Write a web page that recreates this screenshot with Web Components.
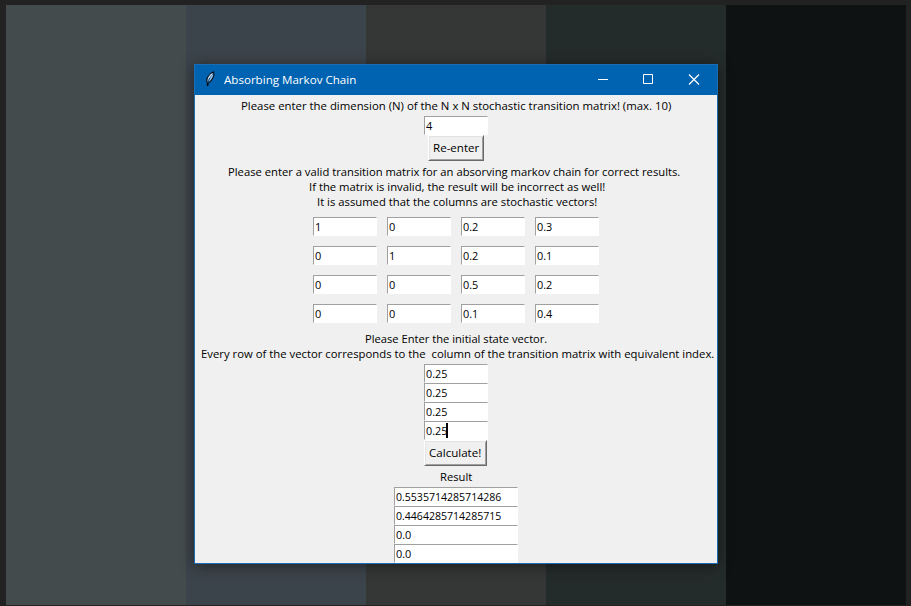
<!DOCTYPE html>
<html lang="en"><head><meta charset="utf-8"><title>Absorbing Markov Chain</title>
<style>html,body{margin:0;width:911px;height:606px;overflow:hidden;background:#222}</style></head><body>
<desk-top>
<app-window>
<fit-text slot="title" w="132">Absorbing Markov Chain</fit-text>
<text-block h="21"><fit-text w="430" x="46">Please enter the dimension (N) of the N x N stochastic transition matrix! (max. 10)</fit-text></text-block>
<entry-box w="64" n="6">4</entry-box>
<push-button w="56"><fit-text w="46">Re-enter</fit-text></push-button>
<text-block h="51"><fit-text w="452" x="33">Please enter a valid transition matrix for an absorving markov chain for correct results.</fit-text><fit-text w="296" x="114">If the matrix is invalid, the result will be incorrect as well!</fit-text><fit-text w="280" x="122">It is assumed that the columns are stochastic vectors!</fit-text></text-block>
<matrix-grid></matrix-grid>
<text-block h="36"><fit-text w="182" x="170">Please Enter the initial state vector.</fit-text><fit-text w="513" x="6">Every row of the vector corresponds to the  column of the transition matrix with equivalent index.</fit-text></text-block>
<entry-box w="64" n="21">0.25</entry-box><entry-box w="64" n="21">0.25</entry-box><entry-box w="64" n="21">0.25</entry-box><entry-box w="64" n="21" caret>0.25</entry-box>
<push-button w="63"><fit-text w="52">Calculate!</fit-text></push-button>
<text-block h="21"><fit-text w="32" x="245">Result</fit-text></text-block>
<entry-box w="124" n="105">0.5535714285714286</entry-box><entry-box w="124" n="105">0.4464285714285715</entry-box><entry-box w="124" n="15">0.0</entry-box><entry-box w="124" n="15">0.0</entry-box>
</app-window>
</desk-top>
<script>
const FONT='"Open Sans","Noto Sans",sans-serif';
const root=(el,html)=>{const r=el.attachShadow({mode:'open'});r.innerHTML=html;return r};

// One line of text condensed to a given width.
customElements.define('fit-text',class extends HTMLElement{
 connectedCallback(){
  if(this.shadowRoot)return;
  const w=+this.getAttribute('w'),x=this.getAttribute('x')||0;
  const r=root(this,`<style>:host{display:block;flex:none;height:15px;white-space:pre;margin-left:${x}px;width:${w+1}px;font:11.6px/15px ${FONT}}span{display:inline-block;transform-origin:0 50%}</style><span><slot></slot></span>`);
  const s=r.querySelector('span');
  s.style.transform='scaleX('+(w+.3)/s.getBoundingClientRect().width+')';
 }});
customElements.define('text-block',class extends HTMLElement{
 connectedCallback(){root(this,`<style>:host{display:flex;flex-direction:column;justify-content:center;align-self:stretch;height:${this.getAttribute('h')}px}</style><slot></slot>`)}});
customElements.define('entry-box',class extends HTMLElement{
 connectedCallback(){
  if(this.shadowRoot)return;
  const t=this.textContent;
  root(this,`<style>:host{box-sizing:border-box;display:flex;align-items:center;flex:none;width:${this.getAttribute('w')}px;height:19px;background:#fff;border:1px solid #a0a0a0;border-right-color:#fff;border-bottom-color:#fff;padding-left:1px}i{width:2px;height:15px;background:#000;margin-left:-2px}</style><fit-text w="${this.getAttribute('n')}">${t}</fit-text>${this.hasAttribute('caret')?'<i></i>':''}`);
 }});
customElements.define('push-button',class extends HTMLElement{
 connectedCallback(){const w=+this.getAttribute('w');root(this,`<style>:host{box-sizing:border-box;display:flex;align-items:center;justify-content:center;flex:none;width:${w}px;margin-right:${w%2}px;height:26px;padding-bottom:2px;background:#f0f0f0;border:1px solid #fff;border-right-color:#696969;border-bottom-color:#696969;box-shadow:inset 1px 1px #e3e3e3,inset -1px -1px #a0a0a0}</style><slot></slot>`)}});
customElements.define('matrix-grid',class extends HTMLElement{
 connectedCallback(){
  const v=['1','0','0.2','0.3','0','1','0.2','0.1','0','0','0.5','0.2','0','0','0.1','0.4'];
  root(this,`<style>:host{display:grid;grid-template-columns:repeat(4,64px);gap:10px;padding:5px 0}</style>${v.map(t=>`<entry-box w="64" n="${t.length>1?15:6}">${t}</entry-box>`).join('')}`);
 }});
customElements.define('app-window',class extends HTMLElement{
 connectedCallback(){root(this,`<style>
:host{box-sizing:border-box;display:flex;flex-direction:column;width:524px;height:500px;border:1px solid #1a6db5;background:#f0f0f0;box-shadow:0 2px 14px rgba(0,0,0,.45);color:#000}
header{display:flex;align-items:center;height:30px;flex:none;background:#0063b1;color:#fff}
.f{width:16px;height:16px;margin:-2px 5px 0 8px}.t{flex:1;padding-bottom:2px}
.c{display:block;width:46px;height:30px}
main{display:flex;flex-direction:column;align-items:center;flex:1}
</style>
<header><svg class="f" viewBox="0 0 16 16"><path d="M4.500 15C4.500 12 5.500 9.500 8 6" fill="none" stroke="#000" stroke-width="1.500"/><path d="M4.300 12C2.500 8.500 5 3 10.500 .8C11.800 4.500 9.500 9.500 5.500 12Z" fill="#8dc0ec" stroke="#061422" stroke-width="1.200"/><path d="M5 12C6 8 7.500 5 9.800 2.500" fill="none" stroke="#17426d" stroke-width="1"/><path d="M5.500 7.500L8.800 3" fill="none" stroke="#eaf6ff"/></svg><div class="t"><slot name="title"></slot></div>
<svg class="c" viewBox="0 0 46 30"><path d="M19 14.500h10" stroke="#fff"/></svg><svg class="c" viewBox="0 0 46 30"><path d="M18.500 9.500h9v9h-9z" fill="none" stroke="#fff"/></svg><svg class="c" viewBox="0 0 46 30"><path d="M18 9.500l10 10m0-10l-10 10" stroke="#fff" stroke-width="1.200"/></svg></header>
<main><slot></slot></main>`)}});
customElements.define('desk-top',class extends HTMLElement{
 connectedCallback(){root(this,`<style>
:host{box-sizing:border-box;display:block;width:911px;height:606px;padding:5px 5px 1px 6px;background:#222}
div{box-sizing:border-box;height:600px;padding:59px 0 0 188px;background:linear-gradient(90deg,#434b4d 0 180px,#3c444b 180px 360px,#353737 360px 540px,#242c2b 540px 720px,#0e1213 720px)}
</style><div><slot></slot></div>`)}});
</script></body></html>
